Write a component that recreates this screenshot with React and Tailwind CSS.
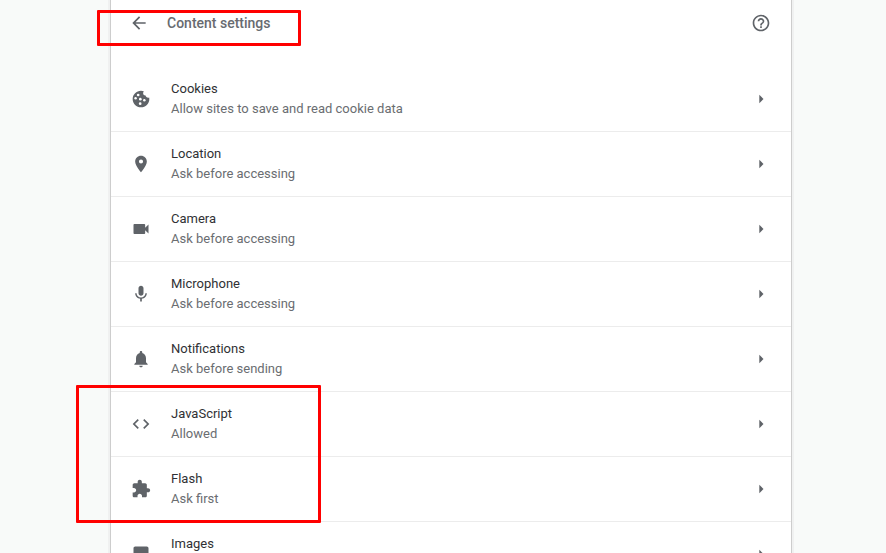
import React from "react";

const ICONS = {
  back: "M20 11H7.83l5.59-5.59L12 4l-8 8 8 8 1.41-1.41L7.83 13H20v-2z",
  help: "M11 18h2v-2h-2v2zm1-16C6.48 2 2 6.48 2 12s4.48 10 10 10 10-4.48 10-10S17.52 2 12 2zm0 18c-4.41 0-8-3.59-8-8s3.59-8 8-8 8 3.59 8 8-3.59 8-8 8zm0-14c-2.21 0-4 1.79-4 4h2c0-1.1.9-2 2-2s2 .9 2 2c0 2-3 1.75-3 5h2c0-2.25 3-2.5 3-5 0-2.21-1.79-4-4-4z",
  arrow: "M10 17l5-5-5-5v10z",
  location: "M12 2C8.13 2 5 5.13 5 9c0 5.25 7 13 7 13s7-7.75 7-13c0-3.87-3.13-7-7-7zm0 9.500a2.500 2.500 0 0 1 0-5 2.500 2.500 0 0 1 0 5z",
  camera: "M17 10.500V7c0-.55-.45-1-1-1H4c-.55 0-1 .45-1 1v10c0 .55.45 1 1 1h12c.55 0 1-.45 1-1v-3.500l4 4v-11l-4 4z",
  mic: "M12 14c1.660 0 2.990-1.340 2.990-3L15 5c0-1.660-1.340-3-3-3S9 3.340 9 5v6c0 1.660 1.340 3 3 3zm5.300-3c0 3-2.540 5.100-5.300 5.100S6.700 14 6.700 11H5c0 3.410 2.720 6.230 6 6.720V21h2v-3.280c3.280-.48 6-3.300 6-6.720h-1.700z",
  bell: "M12 22c1.100 0 2-.9 2-2h-4c0 1.100.89 2 2 2zm6-6v-5c0-3.070-1.640-5.640-4.500-6.320V4c0-.83-.67-1.500-1.500-1.500s-1.500.67-1.500 1.500v.68C7.630 5.360 6 7.920 6 11v5l-2 2v1h16v-1l-2-2z",
  code: "M9.400 16.600L4.800 12l4.600-4.600L8 6l-6 6 6 6 1.400-1.400zm5.200 0l4.600-4.600-4.600-4.600L16 6l6 6-6 6-1.400-1.400z",
  puzzle: "M20.500 11H19V7c0-1.100-.9-2-2-2h-4V3.500C13 2.120 11.880 1 10.500 1S8 2.120 8 3.500V5H4c-1.100 0-1.990.9-1.990 2v3.800H3.500c1.490 0 2.700 1.210 2.700 2.700s-1.210 2.700-2.700 2.700H2V20c0 1.100.9 2 2 2h3.800v-1.500c0-1.490 1.210-2.700 2.700-2.700 1.490 0 2.700 1.210 2.700 2.700V22H17c1.100 0 2-.9 2-2v-4h1.500c1.380 0 2.500-1.120 2.500-2.500S21.880 11 20.500 11z",
  image: "M21 19V5c0-1.100-.9-2-2-2H5c-1.100 0-2 .9-2 2v14c0 1.100.9 2 2 2h14c1.100 0 2-.9 2-2zM8.500 13.500l2.500 3.010L14.500 12l4.500 6H5l3.500-4.500z",
};

function Icon({ name }) {
  return (
    <svg viewBox="0 0 24 24" className="size-5 shrink-0 fill-[#5f6368]">
      <path d={ICONS[name]} />
    </svg>
  );
}

function CookieIcon() {
  return (
    <svg viewBox="0 0 24 24" className="size-5 shrink-0 fill-[#5f6368]">
      <path d="M12 2C6.500 2 2 6.500 2 12s4.500 10 10 10 10-4.500 10-10c0-.6-.1-1.200-.2-1.800-1.600.6-3.400.1-4-1.400-.1-.3-.2-.6-.2-.9-2 .2-3.400-1.500-3-3.300.1-.8.4-1.400.8-1.900C14.300 2.200 13.200 2 12 2z" />
      <g fill="#fff">
        <circle cx="8.600" cy="7.200" r="1.600" />
        <circle cx="5.500" cy="11" r="1.500" />
        <circle cx="11.200" cy="12.200" r="1.600" />
        <circle cx="16" cy="13.400" r="1.500" />
        <circle cx="11" cy="17.600" r="1.600" />
      </g>
    </svg>
  );
}

const ROWS = [
  { icon: "cookie", title: "Cookies", detail: "Allow sites to save and read cookie data" },
  { icon: "location", title: "Location", detail: "Ask before accessing" },
  { icon: "camera", title: "Camera", detail: "Ask before accessing" },
  { icon: "mic", title: "Microphone", detail: "Ask before accessing" },
  { icon: "bell", title: "Notifications", detail: "Ask before sending" },
  { icon: "code", title: "JavaScript", detail: "Allowed" },
  { icon: "puzzle", title: "Flash", detail: "Ask first" },
  { icon: "image", title: "Images" },
];

function SettingRow({ icon, title, detail }) {
  return (
    <div className="flex h-[65px] items-center border-t border-[#ececec] px-5 first:border-transparent">
      {icon === "cookie" ? <CookieIcon /> : <Icon name={icon} />}
      <div className="ml-5 h-10 flex-1 leading-5">
        <div className="text-[#303134]">{title}</div>
        {detail && <div className="text-[#6a6d71]">{detail}</div>}
      </div>
      <Icon name="arrow" />
    </div>
  );
}

export default function App() {
  return (
    <div className="relative h-[553px] w-[886px] overflow-hidden bg-[#f8faf9] font-[Roboto,sans-serif] text-[13px]">
      <main className="ml-[110px] h-[553px] w-[682px] overflow-hidden border-x border-[#cdcdcd] bg-white shadow-[0_0_0_2px_#f0f1f1]">
        <header className="flex h-[46px] items-center pr-5 pl-[18px]">
          <Icon name="back" />
          <h1 className="ml-[18px] flex-1 text-[14px] font-medium text-[#686b70]">Content settings</h1>
          <Icon name="help" />
        </header>
        <div className="pt-5">
          {ROWS.map((row) => (
            <SettingRow key={row.title} {...row} />
          ))}
        </div>
      </main>
      <div className="absolute left-[97px] top-[10px] h-[36px] w-[204px] rounded-[1px] border-3 border-[#ff0000]" />
      <div className="absolute left-[76px] top-[385px] h-[138px] w-[245px] rounded-[1px] border-3 border-[#ff0000]" />
    </div>
  );
}
